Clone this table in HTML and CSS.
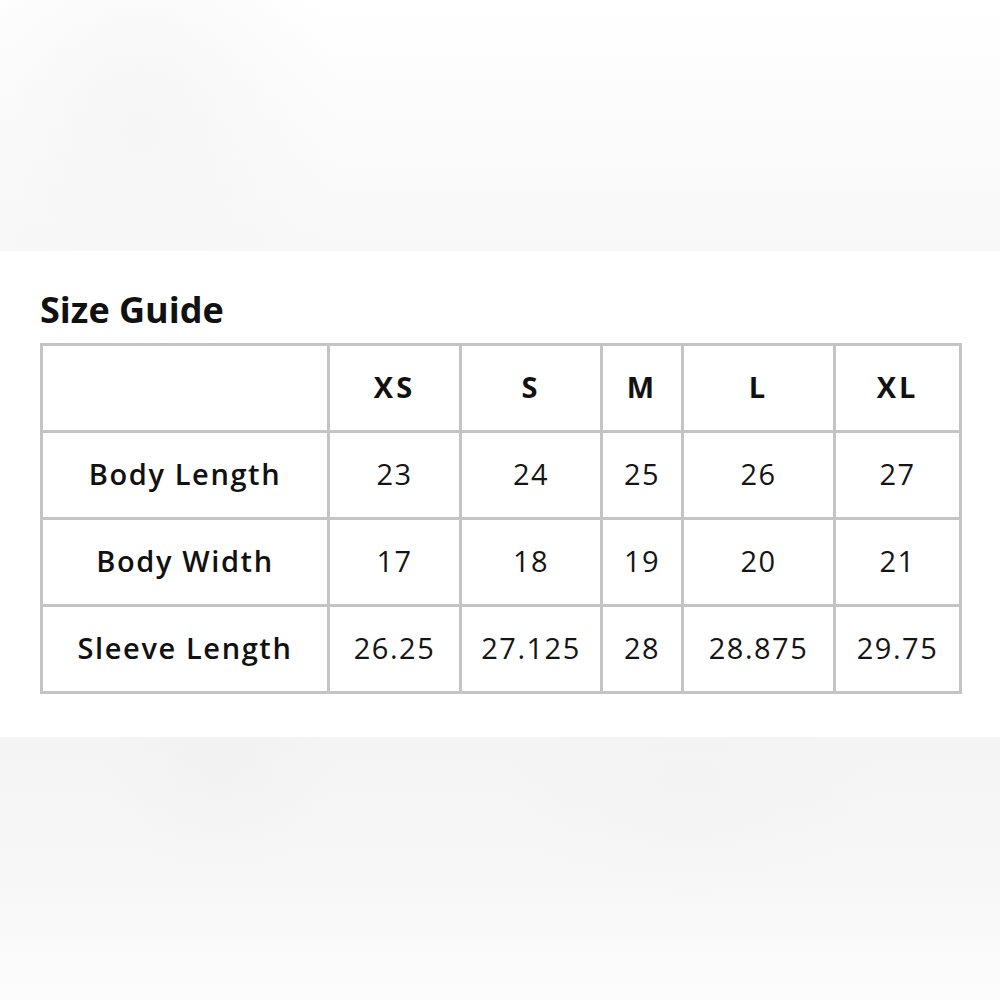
FILE: index.html
```html
<!DOCTYPE html>
<html>
<head>
<meta charset="utf-8">
<link rel="stylesheet" href="styles.css">
</head>
<body>
<div class="top"></div>
<section class="panel">
  <h1 class="title">Size Guide</h1>
  <table class="sizes">
    <colgroup>
      <col class="c0"><col class="c1"><col class="c2"><col class="c3"><col class="c4"><col class="c5">
    </colgroup>
    <tr class="head">
      <th></th><th>XS</th><th>S</th><th>M</th><th>L</th><th>XL</th>
    </tr>
    <tr>
      <th class="label">Body Length</th><td>23</td><td>24</td><td>25</td><td>26</td><td>27</td>
    </tr>
    <tr>
      <th class="label">Body Width</th><td>17</td><td>18</td><td>19</td><td>20</td><td>21</td>
    </tr>
    <tr>
      <th class="label">Sleeve Length</th><td>26.25</td><td>27.125</td><td>28</td><td>28.875</td><td>29.75</td>
    </tr>
  </table>
</section>
<div class="bottom"></div>
</body>
</html>
```

FILE: styles.css
```css
html, body {
  margin: 0;
  padding: 0;
  background: #ffffff;
}
body {
  width: 1000px;
  height: 1000px;
  overflow: hidden;
  font-family: "Open Sans", "DejaVu Sans", sans-serif;
  color: #111;
}
.top {
  height: 251px;
  background:
    radial-gradient(ellipse 200px 260px at 140px 130px, #f6f6f6 0%, rgba(246,246,246,0) 100%),
    linear-gradient(to bottom, #ffffff 0%, #fcfcfc 40%, #f8f8f8 100%);
}
.panel {
  height: 486px;
  box-sizing: border-box;
  padding: 39px 0 0 40px;
  background: #ffffff;
}
.title {
  margin: 0 0 13px 0;
  font-size: 36px;
  line-height: 40px;
  font-weight: 700;
  color: #111;
}
.sizes {
  border-collapse: collapse;
  table-layout: fixed;
  width: 921px;
}
.c0 { width: 287px; }
.c1 { width: 132px; }
.c2 { width: 141px; }
.c3 { width: 81px; }
.c4 { width: 152px; }
.c5 { width: 126px; }
.sizes th, .sizes td {
  border: 3px solid #c4c4c4;
  height: 81px;
  padding: 0 0 3px 0;
  text-align: center;
  vertical-align: middle;
}
.sizes th {
  font-weight: 700;
  font-size: 29px;
  letter-spacing: 3px;
  color: #111;
}
.sizes th.label {
  font-weight: 600;
  font-size: 29px;
  letter-spacing: 1.6px;
}
.sizes td {
  font-weight: 400;
  font-size: 29px;
  letter-spacing: 1.5px;
  color: #151515;
}
.bottom {
  height: 263px;
  background:
    radial-gradient(ellipse 120px 120px at 220px 20px, #f2f2f2 0%, rgba(242,242,242,0) 100%),
    radial-gradient(ellipse 200px 120px at 690px 40px, #f3f3f3 0%, rgba(243,243,243,0) 100%),
    linear-gradient(to bottom, #f4f4f4 0%, #f7f7f7 50%, #fcfcfc 100%);
}
```
